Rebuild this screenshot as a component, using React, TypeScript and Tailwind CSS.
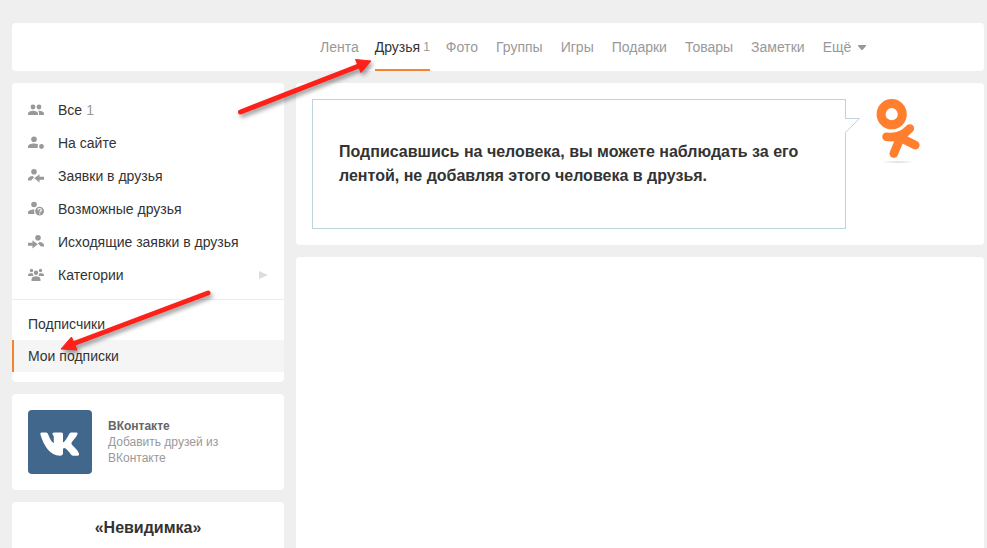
import type { ReactNode } from "react";

const navItems = ["Лента", "Друзья", "Фото", "Группы", "Игры", "Подарки", "Товары", "Заметки"];

function Icon({ children }: { children: ReactNode }) {
  return (
    <svg className="size-4 shrink-0 fill-[#999]" viewBox="0 0 16 16" aria-hidden="true">
      {children}
    </svg>
  );
}

const icons = {
  all: (
    <Icon>
      <circle cx="5" cy="5" r="2.4" />
      <circle cx="11" cy="5" r="2.4" />
      <path d="M0 13v-1.600C0 9.600 2.500 8.700 5 8.700s5 .9 5 2.700V13zM11 13v-2c0-.9-.4-1.600-1-2.200 2.900-.3 6 .7 6 2.600V13z" />
    </Icon>
  ),
  online: (
    <Icon>
      <circle cx="6" cy="4.200" r="2.800" />
      <path d="M0 13v-1.600C0 9.500 3 8.500 6 8.500c1.600 0 3.100.3 4.300.9a4 4 0 0 0-.5 3.600z" />
      <circle cx="13.500" cy="11.500" r="2.400" />
    </Icon>
  ),
  requests: (
    <Icon>
      <circle cx="6" cy="3.700" r="2.800" />
      <path d="M0 12.500V11c0-1.600 2-2.700 4.700-3L6 9.500l-3 3zM11.500 6.200v2.600H16v3h-4.500v2.700L6.200 10.300z" />
    </Icon>
  ),
  possible: (
    <Icon>
      <circle cx="6" cy="3.500" r="2.800" />
      <path d="M0 13v-1.600c0-2 3-3 6-3h.6A5.500 5.500 0 0 0 6.600 13z" />
      <circle cx="11.600" cy="10.200" r="4.400" />
      <path
        d="M10 9.200c0-2.300 3.300-2.200 3.300-.2 0 1.200-1.600 1.200-1.600 2.200M11.700 12.200v1"
        fill="none"
        stroke="#fff"
        strokeWidth="1.200"
      />
    </Icon>
  ),
  outgoing: (
    <Icon>
      <circle cx="10" cy="3.700" r="2.800" />
      <path d="M16 12.500V11c0-1.600-2-2.700-4.700-3L10 9.500l3 3zM4.500 6.200v2.600H0v3h4.500v2.700l5.300-4.200z" />
    </Icon>
  ),
  categories: (
    <Icon>
      <circle cx="3.500" cy="3.500" r="1.700" />
      <circle cx="12.500" cy="3.500" r="1.700" />
      <circle cx="8" cy="5.800" r="2.200" />
      <path d="M0 9V7.800C0 6.500 2 5.900 4.600 6.300c.2 1.100.5 1.700 1 2.200L4.500 9zM16 9V7.800c0-1.300-2-1.900-4.600-1.500-.2 1.100-.5 1.700-1 2.200l1.100.5zM3.500 14v-1.500C3.500 10.200 5.500 9.200 8 9.200s4.500 1 4.500 3.300V14z" />
    </Icon>
  ),
};

const filters = [
  { icon: icons.all, label: "Все", count: 1 },
  { icon: icons.online, label: "На сайте" },
  { icon: icons.requests, label: "Заявки в друзья" },
  { icon: icons.possible, label: "Возможные друзья" },
  { icon: icons.outgoing, label: "Исходящие заявки в друзья" },
  { icon: icons.categories, label: "Категории", expandable: true },
];

function Header() {
  return (
    <header className="rounded bg-white">
      <nav className="ml-[308px] flex h-12 gap-[18px] text-sm text-[#999]">
        {navItems.map((item) => {
          const active = item === "Друзья";
          return (
            <a
              key={item}
              href="#"
              className={
                active
                  ? "-mx-0.5 flex items-center gap-[3px] border-b-2 border-[#f7822f] pt-0.5 text-[#333]"
                  : "flex items-center"
              }
            >
              {item}
              {active && <span className="text-xs text-[#999]">1</span>}
            </a>
          );
        })}
        <button type="button" className="flex items-center gap-[7px]">
          Ещё
          <svg className="h-[5px] w-2 fill-[#999]" viewBox="0 0 8 5" aria-hidden="true">
            <path d="M0 0h8v1L4.500 5h-1L0 1z" />
          </svg>
        </button>
      </nav>
    </header>
  );
}

function FriendsMenu() {
  return (
    <nav className="rounded bg-white pb-2.5 text-sm text-[#333]">
      <ul className="border-b border-[#ebebeb] pt-2.5 pb-2">
        {filters.map(({ icon, label, count, expandable }) => (
          <li key={label}>
            <a href="#" className="flex h-[33px] items-center px-4">
              {icon}
              <span className="ml-[14px]">{label}</span>
              {count && <span className="ml-1 text-[#999]">{count}</span>}
              {expandable && (
                <svg className="ml-auto h-2 w-[9px] fill-[#ddd]" viewBox="0 0 9 8" aria-hidden="true">
                  <path d="M0 0l9 4-9 4z" />
                </svg>
              )}
            </a>
          </li>
        ))}
      </ul>
      <ul className="pt-2">
        <li>
          <a href="#" className="flex h-8 items-center px-4">
            Подписчики
          </a>
        </li>
        <li>
          <a
            href="#"
            aria-current="page"
            className="flex h-8 items-center border-l-2 border-[#f7822f] bg-[#f5f5f5] pr-4 pl-3.5"
          >
            Мои подписки
          </a>
        </li>
      </ul>
    </nav>
  );
}

function VkCard() {
  return (
    <a href="#" className="flex items-center gap-4 rounded bg-white p-4 text-xs leading-4 text-[#999]">
      <span className="flex size-16 shrink-0 items-center justify-center rounded bg-[#41678c] pt-1">
        <svg className="h-6 w-10 fill-white" viewBox="0 0 40 24" aria-hidden="true">
          <path d="M1.500 .5H6C7 .5 7.500 1 8 2C10 7 12 10.500 13.800 11V5C13.800 3 12 2.500 12.500 1.200Q13 .5 14.500 .5H21.500Q23 .5 23 2V9.500Q23 10.800 24 10C26 8 28 4.500 29.300 1.800Q30 .5 31.500 .5H36.500Q38.300 .5 37.500 2.300C36.500 4.800 33.500 8 31.800 10.200Q30.800 11.500 32 12.800C34.500 15.500 37.500 18 38.800 21Q39.800 23.700 37.500 23.700H33.500Q32 23.700 31 22.500C29 20 27 17 24.500 16Q23 15.500 23 17.500V21Q23 23.700 20 23.700C10 23.700 4 14 .4 2.500Q0 .5 1.500 .5Z" />
        </svg>
      </span>
      <span>
        <strong className="block text-[#666]">ВКонтакте</strong>
        Добавить друзей из ВКонтакте
      </span>
    </a>
  );
}

function Mascot() {
  return (
    <svg className="h-[66px] w-[46px]" viewBox="0 0 46 66" role="img" aria-label="Одноклассники">
      <defs>
        <radialGradient id="ground">
          <stop offset="0" stopColor="#d8d8d8" />
          <stop offset="1" stopColor="#fff" />
        </radialGradient>
      </defs>
      <ellipse cx="22" cy="63" rx="17" ry="1.500" fill="url(#ground)" />
      <g fill="none" stroke="#ff7f2e" strokeWidth="8.600" strokeLinecap="round" strokeLinejoin="round">
        <circle cx="15.700" cy="15.200" r="10.600" strokeWidth="9" />
        <path d="M10.500 37.800Q24 40 33.800 29.500M33.800 29.500L24.500 38.500L17.800 54.500M24 38.500L39.300 46.200" />
      </g>
    </svg>
  );
}

function Intro() {
  return (
    <section className="flex gap-[30px] rounded bg-white p-4">
      <div className="relative min-h-[130px] flex-1 border border-[#bcd5d9] px-[26px] py-10">
        <p className="text-base leading-6 font-bold text-[#333]">
          Подписавшись на человека, вы можете наблюдать за его лентой, не добавляя этого человека в друзья.
        </p>
        <svg className="absolute top-[18px] -right-4 size-4" viewBox="0 0 16 16" aria-hidden="true">
          <path d="M0 .5h14.500L.5 14.500H0z" fill="#fff" />
          <path d="M0 .5h14.500L.5 14.500" fill="none" stroke="#bcd5d9" />
        </svg>
      </div>
      <div className="w-[92px] shrink-0">
        <Mascot />
      </div>
    </section>
  );
}

function Arrows() {
  return (
    <svg
      className="pointer-events-none absolute top-0 left-0 h-[360px] w-[400px] drop-shadow-[2px_3px_2px_rgba(0,0,0,0.4)]"
      viewBox="0 0 400 360"
      aria-hidden="true"
    >
      <g fill="#fd2119" stroke="#fd2119">
        <path d="M240.500 112L360 65.500M208 293L74 343.500" strokeWidth="5" strokeLinecap="round" />
        <path d="M371 61L355.500 59.500L361 72.500ZM61 349L71.500 337L77 350Z" strokeWidth="1" />
      </g>
    </svg>
  );
}

export default function App() {
  return (
    <div className="relative flex h-screen flex-col gap-3 overflow-hidden bg-[#efefef] pt-[23px] pr-[3px] pl-3 font-['Liberation_Sans',Arial,sans-serif]">
      <Header />
      <div className="flex min-h-0 flex-1 gap-3">
        <aside className="flex w-[272px] shrink-0 flex-col gap-3">
          <FriendsMenu />
          <VkCard />
          <section className="flex-1 rounded-t bg-white px-4 pt-3.5">
            <h2 className="text-center text-base leading-6 font-bold text-[#333]">«Невидимка»</h2>
          </section>
        </aside>
        <main className="flex min-w-0 flex-1 flex-col gap-3">
          <Intro />
          <section className="flex-1 rounded-t bg-white" />
        </main>
      </div>
      <Arrows />
    </div>
  );
}
